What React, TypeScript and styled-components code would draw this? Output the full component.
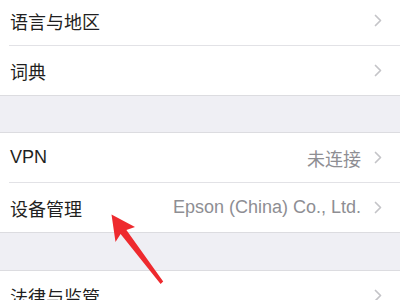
import React from "react";
import styled, { createGlobalStyle } from "styled-components";

const GlobalStyle = createGlobalStyle`
  html, body {
    margin: 0;
    padding: 0;
    background: #efeff4;
  }
  body {
    font-family: "Liberation Sans", "Noto Sans CJK SC", sans-serif;
    -webkit-font-smoothing: antialiased;
  }
`;

const Screen = styled.div`
  position: relative;
  width: 400px;
  height: 300px;
  overflow: hidden;
  background: #efeff4;
`;

const List = styled.div`
  display: flex;
  flex-direction: column;
  margin-top: -5px;
`;

const Group = styled.div`
  display: flex;
  flex-direction: column;
  background: #ffffff;
  border-top: 1px solid #dcdce0;
  border-bottom: 1px solid #dcdce0;
`;

const Gap = styled.div`
  height: ${(p: { $h: number }) => p.$h}px;
  background: #efeff4;
`;

const Row = styled.div<{ $h?: number }>`
  display: flex;
  align-items: center;
  height: ${(p) => p.$h ?? 49}px;
  padding: 0 18px 0 10px;
  box-sizing: border-box;
`;

const Label = styled.span`
  flex: 1;
  font-size: 18px;
  color: #1f1f21;
  white-space: nowrap;
`;

const Detail = styled.span`
  font-size: 18px;
  color: #8e8e93;
  margin-right: 13px;
  white-space: nowrap;
`;

const Separator = styled.div`
  height: 1px;
  margin-left: 9px;
  background: #e2e2e6;
`;

const Arrow = styled.svg`
  position: absolute;
  left: 105px;
  top: 210px;
  width: 65px;
  height: 80px;
  pointer-events: none;
`;

const Chevron = () => (
  <svg width="8" height="13" viewBox="0 0 8 13" aria-hidden="true">
    <path
      d="M1.5 1.5 L6.5 6.5 L1.5 11.5"
      fill="none"
      stroke="#c4c4c8"
      strokeWidth="1.7"
      strokeLinecap="round"
      strokeLinejoin="round"
    />
  </svg>
);

type Item = { label: string; detail?: string };

const Cell = ({ label, detail, h }: Item & { h?: number }) => (
  <Row $h={h}>
    <Label>{label}</Label>
    {detail && <Detail>{detail}</Detail>}
    <Chevron />
  </Row>
);

export default function App() {
  return (
    <Screen>
      <GlobalStyle />
      <List>
        <Group>
          <Cell label="语言与地区" />
          <Separator />
          <Cell label="词典" />
        </Group>
        <Gap $h={36} />
        <Group>
          <Cell label="VPN" detail="未连接" />
          <Separator />
          <Cell label="设备管理" detail="Epson (China) Co., Ltd." />
        </Group>
        <Gap $h={37} />
        <Group>
          <Cell label="法律与监管" />
        </Group>
      </List>
      <Arrow viewBox="105 210 65 80" aria-hidden="true">
        <polygon
          points="111.5,214.5 135,227 126.4,230 163.2,281.6 160.6,284 120.6,234 115.5,242"
          fill="#ee2a2e"
        />
      </Arrow>
    </Screen>
  );
}
